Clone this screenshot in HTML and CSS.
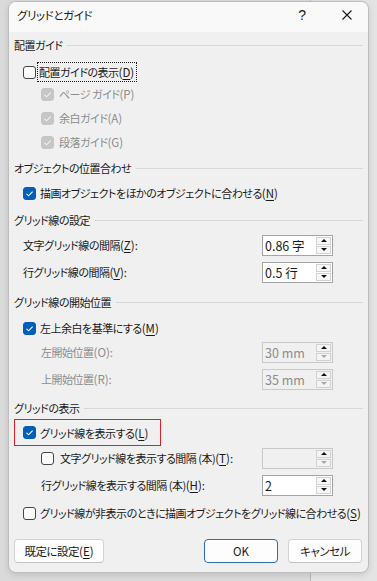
FILE: index.html
```html
<!DOCTYPE html>
<html lang="ja">
<head>
<meta charset="utf-8">
<title>グリッドとガイド</title>
<link rel="stylesheet" href="styles.css">
</head>
<body>
<div class="dialog">
  <div class="titlebar">
    <span class="title">グリッドとガイド</span>
    <span class="help">?</span>
    <span class="close"><svg width="10" height="10" viewBox="0 0 10 10"><path d="M0.5 0.5L9.5 9.5M9.5 0.5L0.5 9.5" stroke="#1a1a1a" stroke-width="1.1" fill="none"/></svg></span>
  </div>
  <div class="content">
    <div class="hdr m-h1"><span>配置ガイド</span></div>
    <div class="row lv1 m-a"><span class="cb"></span><span class="lbl focus">配置ガイドの表示<span class="mn">(<u>D</u>)</span></span></div>
    <div class="row lv2 dis m-b"><span class="cb cb-dis"><svg width="13" height="13" viewBox="0 0 13 13"><path d="M3.5 6.8L5.6 8.8L9.6 4.6" stroke="#f2f2f2" stroke-width="1.1" fill="none"/></svg></span><span class="lbl">ページ ガイド<span class="mn">(P)</span></span></div>
    <div class="row lv2 dis m-c"><span class="cb cb-dis"><svg width="13" height="13" viewBox="0 0 13 13"><path d="M3.5 6.8L5.6 8.8L9.6 4.6" stroke="#f2f2f2" stroke-width="1.1" fill="none"/></svg></span><span class="lbl">余白ガイド<span class="mn">(A)</span></span></div>
    <div class="row lv2 dis m-c"><span class="cb cb-dis"><svg width="13" height="13" viewBox="0 0 13 13"><path d="M3.5 6.8L5.6 8.8L9.6 4.6" stroke="#f2f2f2" stroke-width="1.1" fill="none"/></svg></span><span class="lbl">段落ガイド<span class="mn">(G)</span></span></div>

    <div class="hdr m-h2"><span>オブジェクトの位置合わせ</span></div>
    <div class="row lv1 m-d"><span class="cb cb-on"><svg width="13" height="13" viewBox="0 0 13 13"><path d="M3.5 6.8L5.6 8.8L9.6 4.6" stroke="#fff" stroke-width="1.1" fill="none"/></svg></span><span class="lbl">描画オブジェクトをほかのオブジェクトに合わせる<span class="mn">(<u>N</u>)</span></span></div>

    <div class="hdr m-h3"><span>グリッド線の設定</span></div>
    <div class="row lv1 field m-e"><span class="lbl">文字グリッド線の間隔<span class="mn">(<u>Z</u>):</span></span>
      <span class="spin"><span class="val">0.86 字</span><span class="btns"><span class="sb"><i class="up"></i></span><span class="sb"><i class="dn"></i></span></span></span></div>
    <div class="row lv1 field m-f"><span class="lbl">行グリッド線の間隔<span class="mn">(<u>V</u>):</span></span>
      <span class="spin"><span class="val">0.5 行</span><span class="btns"><span class="sb"><i class="up"></i></span><span class="sb"><i class="dn"></i></span></span></span></div>

    <div class="hdr m-h4"><span>グリッド線の開始位置</span></div>
    <div class="row lv1 m-g"><span class="cb cb-on"><svg width="13" height="13" viewBox="0 0 13 13"><path d="M3.5 6.8L5.6 8.8L9.6 4.6" stroke="#fff" stroke-width="1.1" fill="none"/></svg></span><span class="lbl">左上余白を基準にする<span class="mn">(<u>M</u>)</span></span></div>
    <div class="row lv2 field dis m-h"><span class="lbl">左開始位置<span class="mn">(O):</span></span>
      <span class="spin spin-dis"><span class="val">30 mm</span><span class="btns"><span class="sb"><i class="up"></i></span><span class="sb"><i class="dn off"></i></span></span></span></div>
    <div class="row lv2 field dis m-f"><span class="lbl">上開始位置<span class="mn">(R):</span></span>
      <span class="spin spin-dis"><span class="val">35 mm</span><span class="btns"><span class="sb"><i class="up"></i></span><span class="sb"><i class="dn off"></i></span></span></span></div>

    <div class="hdr m-i"><span>グリッドの表示</span></div>
    <div class="row hl m-j"><span class="cb cb-on"><svg width="13" height="13" viewBox="0 0 13 13"><path d="M3.5 6.8L5.6 8.8L9.6 4.6" stroke="#fff" stroke-width="1.1" fill="none"/></svg></span><span class="lbl">グリッド線を表示する<span class="mn">(<u>L</u>)</span></span></div>
    <div class="row lv2 field m-j"><span class="cbwrap"><span class="cb"></span><span class="lbl">文字グリッド線を表示する間隔 (本)<span class="mn">(<u>T</u>):</span></span></span>
      <span class="spin spin-dis"><span class="val"></span><span class="btns"><span class="sb"><i class="up"></i></span><span class="sb"><i class="dn off"></i></span></span></span></div>
    <div class="row lv2 field m-f"><span class="lbl">行グリッド線を表示する間隔 (本)<span class="mn">(<u>H</u>):</span></span>
      <span class="spin"><span class="val">2</span><span class="btns"><span class="sb"><i class="up"></i></span><span class="sb"><i class="dn"></i></span></span></span></div>
    <div class="row lv1 m-k"><span class="cb"></span><span class="lbl">グリッド線が非表示のときに描画オブジェクトをグリッド線に合わせる<span class="mn">(<u>S</u>)</span></span></div>

    <div class="buttons">
      <button class="btn btn-def">既定に設定<span class="mn">(<u>E</u>)</span></button>
      <span class="spacer"></span>
      <button class="btn btn-ok">OK</button>
      <button class="btn btn-cancel">キャンセル</button>
    </div>
  </div>
</div>
</body>
</html>
```

FILE: styles.css
```css
* { box-sizing: border-box; }
html, body { margin: 0; }
body {
  width: 377px;
  height: 581px;
  overflow: hidden;
  background: linear-gradient(to right, #dadada 0, #dadada 310px, #b9b9b9 310px, #b9b9b9 311px, #e4e4e4 311px);
  font-family: "Noto Sans CJK JP", "Noto Sans", sans-serif;
  font-size: 12px;
  font-feature-settings: "palt";
  color: #1a1a1a;
}
.dialog {
  margin: 1px 0 0 8px;
  width: 361px;
  height: 572px;
  background: #f0f0f0;
  border: 1px solid #bdbdbd;
  border-radius: 8px;
  overflow: hidden;
  display: flex;
  flex-direction: column;
  box-shadow: 0 2px 6px rgba(0,0,0,0.12);
}
.titlebar {
  height: 30px;
  flex: none;
  background: #f9f9f9;
  display: flex;
  align-items: center;
  padding: 0 16px 4px 8px;
}
.title { flex: 1; font-size: 11.5px; letter-spacing: -0.4px; }
.help { font-size: 14px; margin-right: 36px; font-family: "Liberation Sans", sans-serif; }
.close { width: 10px; height: 10px; display: flex; }
.content {
  flex: 1;
  display: flex;
  flex-direction: column;
  padding: 0 5px;
  font-size: 11px;
  letter-spacing: -0.5px;
}
.mn { letter-spacing: 0; font-size: 11.5px; }
.hdr {
  height: 20px;
  flex: none;
  display: flex;
  align-items: center;
  gap: 5px;
}
.hdr::after {
  content: "";
  flex: 1;
  height: 1px;
  background: #d8d8d8;
}
.row {
  height: 22px;
  flex: none;
  display: flex;
  align-items: center;
  gap: 4px;
  white-space: nowrap;
}
.lv1 { padding-left: 9px; }
.lv2 { padding-left: 27px; }
.lv2 .cb + .lbl { margin-left: 1px; }
.dis { color: #8c8c8c; }
.field { justify-content: space-between; padding-right: 30px; }
.cbwrap { display: flex; align-items: center; gap: 5px; }
u { text-decoration: underline; text-underline-offset: 2px; text-decoration-thickness: 1px; }

.m-h1 { margin-top: 3px; }
.m-a { margin-top: 6px; }
.m-b { margin-top: 0; }
.m-c { margin-top: 2px; }
.m-h2 { margin-top: 5px; }
.m-d { margin-top: 4px; }
.m-h3 { margin-top: 6px; }
.m-e { margin-top: 4px; }
.m-f { margin-top: 5px; }
.m-h4 { margin-top: 9px; }
.m-g { margin-top: 5px; }
.m-h { margin-top: 2px; }
.m-i { margin-top: 8px; }
.m-j { margin-top: 1px; }
.m-k { margin-top: 6px; }

.cb {
  width: 13px;
  height: 13px;
  flex: none;
  border: 1px solid #454545;
  border-radius: 3px;
  background: #fbfbfb;
  display: flex;
}
.cb-on { background: #005fb8; border-color: #005fb8; }
.cb-dis { background: #c6c6c6; border-color: #c6c6c6; }
.cb svg { margin: -1px; }
.focus { outline: 1px dotted #1a1a1a; outline-offset: 0; padding: 1px 2px 1px 1px; margin-left: -2px; }

.hl {
  height: 27px;
  width: 147px;
  border: 1px solid #e0202a;
  padding-left: 8px;
}

.spin {
  width: 71px;
  height: 21px;
  flex: none;
  border: 1px solid #a4a4a4;
  background: #fff;
  display: flex;
  align-items: center;
  padding-left: 2px;
  color: #1a1a1a;
  font-size: 12.5px;
  letter-spacing: 0;
}
.spin-dis { background: #f0f0f0; border-color: #c9c9c9; color: #8c8c8c; }
.val { flex: 1; }
.btns {
  display: flex;
  flex-direction: column;
  gap: 1px;
  margin-right: 1px;
}
.sb {
  width: 15px;
  height: 8px;
  border: 1px solid #d2d2d2;
  background: #f7f7f7;
  display: flex;
  align-items: center;
  justify-content: center;
}
.spin-dis .sb { background: #f4f4f4; }
.up, .dn { width: 0; height: 0; border-left: 3px solid transparent; border-right: 3px solid transparent; }
.up { border-bottom: 3px solid #111; }
.dn { border-top: 3px solid #111; }
.dn.off { border-top-color: #a8a8a8; }

.buttons {
  margin-top: 15px;
  display: flex;
  gap: 10px;
  padding-right: 1px;
}
.spacer { flex: 1; }
.btn {
  height: 24px;
  font-family: inherit;
  font-size: 11.5px;
  letter-spacing: -0.5px;
  font-feature-settings: "palt";
  color: #1a1a1a;
  background: #fdfdfd;
  border: 1px solid #d3d3d3;
  border-bottom-color: #c2c2c2;
  border-radius: 4px;
  padding: 0;
}
.btn-def { width: 90px; }
.btn-ok { width: 74px; border-color: #2c6bb0; letter-spacing: 0; }
.btn-cancel { width: 74px; }
```
